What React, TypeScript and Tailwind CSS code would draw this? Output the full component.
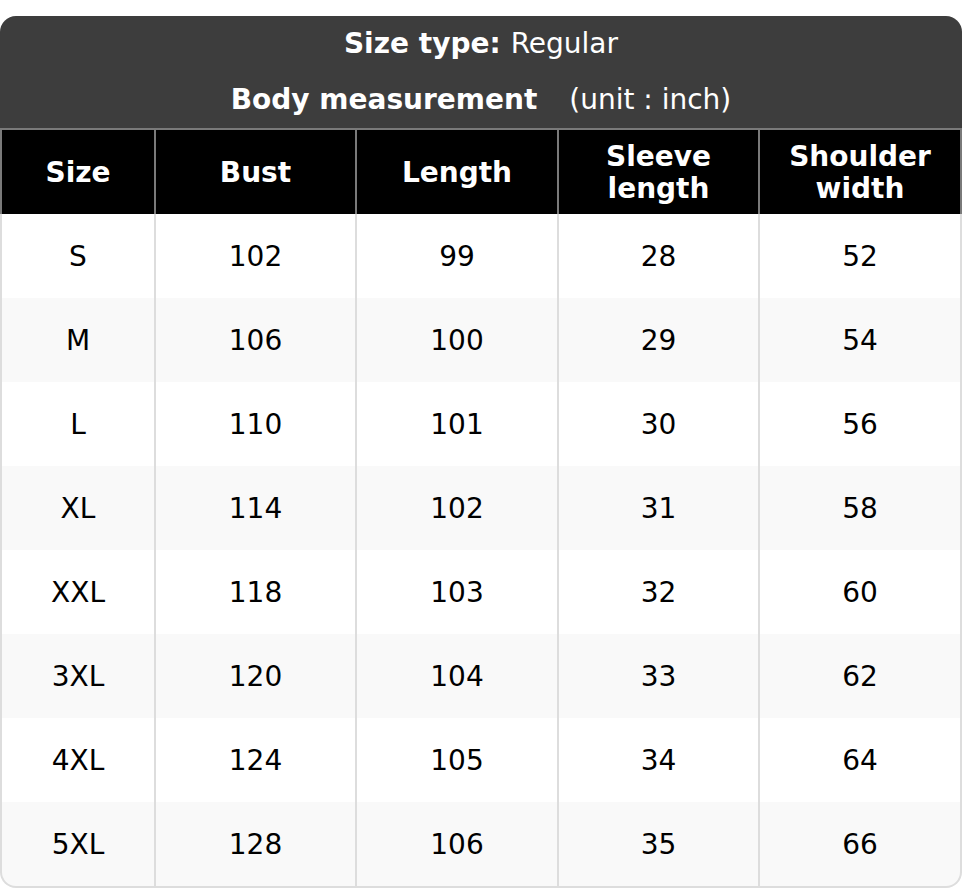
import React from "react";

const headers: string[][] = [["Size"], ["Bust"], ["Length"], ["Sleeve", "length"], ["Shoulder", "width"]];
const rows: string[][] = [
  ["S", "102", "99", "28", "52"],
  ["M", "106", "100", "29", "54"],
  ["L", "110", "101", "30", "56"],
  ["XL", "114", "102", "31", "58"],
  ["XXL", "118", "103", "32", "60"],
  ["3XL", "120", "104", "33", "62"],
  ["4XL", "124", "105", "34", "64"],
  ["5XL", "128", "106", "35", "66"],
];

export default function App() {
  return (
    <div className="w-[962px] h-[888px] bg-white pt-[16px]" style={{ fontFamily: '"DejaVu Sans", sans-serif' }}>
      <div className="w-[962px] rounded-[16px] overflow-hidden">
        <div className="bg-[#3d3d3d] h-[112px] flex flex-col text-white text-[28px]">
          <div className="h-[55px] flex items-center justify-center">
            <span className="font-bold">Size type:</span>
            <span className="ml-[10px]">Regular</span>
          </div>
          <div className="h-[57px] flex items-center justify-center">
            <span className="font-bold">Body measurement</span>
            <span className="ml-[32px]">(unit : inch)</span>
          </div>
        </div>
        <div className="bg-[#7a7a7a] pt-[2px] px-[2px] grid grid-cols-[152px_199px_200px_199px_200px] gap-x-[2px]">
          {headers.map((h, i) => (
            <div key={i} className="bg-black h-[84px] pt-[2px] flex flex-col items-center justify-center text-white font-bold text-[28px] leading-[32px]">
              {h.map((l, j) => (
                <span key={j}>{l}</span>
              ))}
            </div>
          ))}
        </div>
        <div className="bg-[#dddddd] px-[2px] pb-[2px] grid grid-cols-[152px_199px_200px_199px_200px] gap-x-[2px]">
          {rows.map((r, ri) =>
            r.map((c, ci) => {
              const last = ri === rows.length - 1;
              const alt = ri % 2 === 1;
              return (
                <div
                  key={ri + "-" + ci}
                  className={
                    "h-[84px] pt-[2px] flex items-center justify-center text-black text-[28px] " +
                    (alt ? "bg-[#f9f9f9] " : "bg-white ") +
                    (last && ci === 0 ? "rounded-bl-[14px] " : "") +
                    (last && ci === 4 ? "rounded-br-[14px] " : "")
                  }
                >
                  {c}
                </div>
              );
            })
          )}
        </div>
      </div>
    </div>
  );
}
